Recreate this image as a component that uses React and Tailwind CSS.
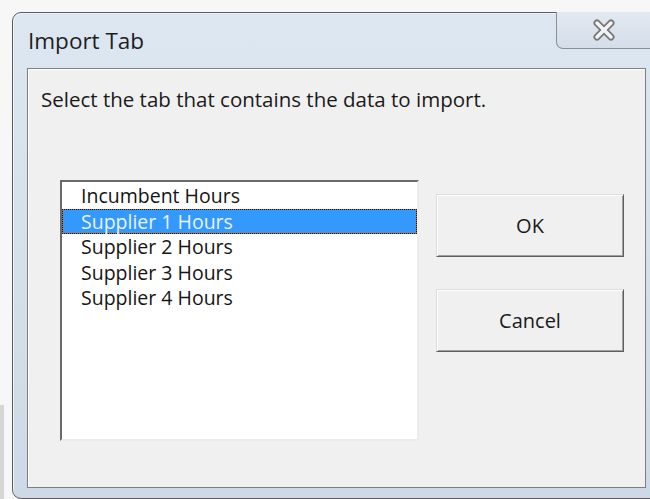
import { useState } from "react";

const tabs = ["Incumbent Hours", "Supplier 1 Hours", "Supplier 2 Hours", "Supplier 3 Hours", "Supplier 4 Hours"];

function CloseGlyph() {
    return (
        <svg width="26" height="22" viewBox="0 0 26 22">
            <path d="M6 4 L20 18 M20 4 L6 18" stroke="#777777" strokeWidth="7" strokeLinecap="round" fill="none"/>
            <path d="M6 4 L20 18 M20 4 L6 18" stroke="#f4f4f4" strokeWidth="3.5" strokeLinecap="round" fill="none"/>
        </svg>
    );
};

function DialogButton({ children }) {
    return (
        <button className="w-[188px] h-[63px] bg-[#f0f0f0] border border-t-[#dcdcdc] border-l-[#dcdcdc] border-b-[#5f5f5f] border-r-[#5f5f5f] shadow-[inset_1px_1px_0_#ffffff,inset_-1px_-1px_0_#a0a0a0] text-[20px] text-[#1a1a1a]">
            {children}
        </button>
    );
};

export default function App() {
    const [selected, setSelected] = useState(1);

    return (
        <div className="w-[650px] h-[499px] overflow-hidden flex bg-[#f7f7f7] font-['Open_Sans',sans-serif]">
            <div className="w-[12px] shrink-0 flex flex-col justify-end">
                <div className="w-[4px] h-[94px] bg-[#d6d6d6]"></div>
            </div>
            <div className="mt-[12px] w-[650px] h-[487px] shrink-0 rounded-l-[9px] border border-[#5c5c5c] bg-gradient-to-b from-[#dde7f2] to-[#cdd9e6] shadow-[inset_1px_1px_0_#eef3f8] flex flex-col">
                <div className="h-[55px] shrink-0 flex justify-between items-start">
                    <p className="ml-[15px] mt-[17px] text-[22.5px] leading-none text-[#1e1e1e]">Import Tab</p>
                    <div className="w-[105px] h-[37px] mt-[-1px] border border-t-0 border-[#8a8f96] rounded-b-[7px] bg-gradient-to-b from-[#e2e9f1] to-[#d4dee9] flex items-center justify-center pr-[9px]">
                        <CloseGlyph/>
                    </div>
                </div>
                <div className="ml-[14px] w-[619px] h-[420px] border border-[#7f7f7f] shadow-[inset_1px_1px_0_#ffffff] bg-[#f0f0f0] flex flex-col">
                    <p className="ml-[13px] mt-[17px] text-[20.5px] leading-[26px] text-[#1a1a1a]">Select the tab that contains the data to import.</p>
                    <div className="mt-[68px] ml-[32px] flex items-start gap-[17px]">
                        <div className="w-[359px] h-[261px] bg-white border-2 border-t-[#6a6a6a] border-l-[#6a6a6a] border-b-[#ececec] border-r-[#ececec] pt-[1px]">
                            {tabs.map((tab, i) => (
                                i === selected ? (
                                    <div key={tab} className="bg-[#c86a10]">
                                        <div className="h-[25.5px] bg-[#3399ff] bg-clip-padding border border-dotted border-[#151515] pl-[18px] flex items-center text-[19.5px] text-[#eaf3ff]">{tab}</div>
                                    </div>
                                ) : (
                                    <div key={tab} onClick={() => setSelected(i)} className="h-[25.5px] pl-[19px] flex items-center text-[19.5px] text-[#151515]">{tab}</div>
                                )
                            ))}
                        </div>
                        <div className="mt-[14px] flex flex-col gap-[32px]">
                            <DialogButton>OK</DialogButton>
                            <DialogButton>Cancel</DialogButton>
                        </div>
                    </div>
                </div>
            </div>
        </div>
    );
};
